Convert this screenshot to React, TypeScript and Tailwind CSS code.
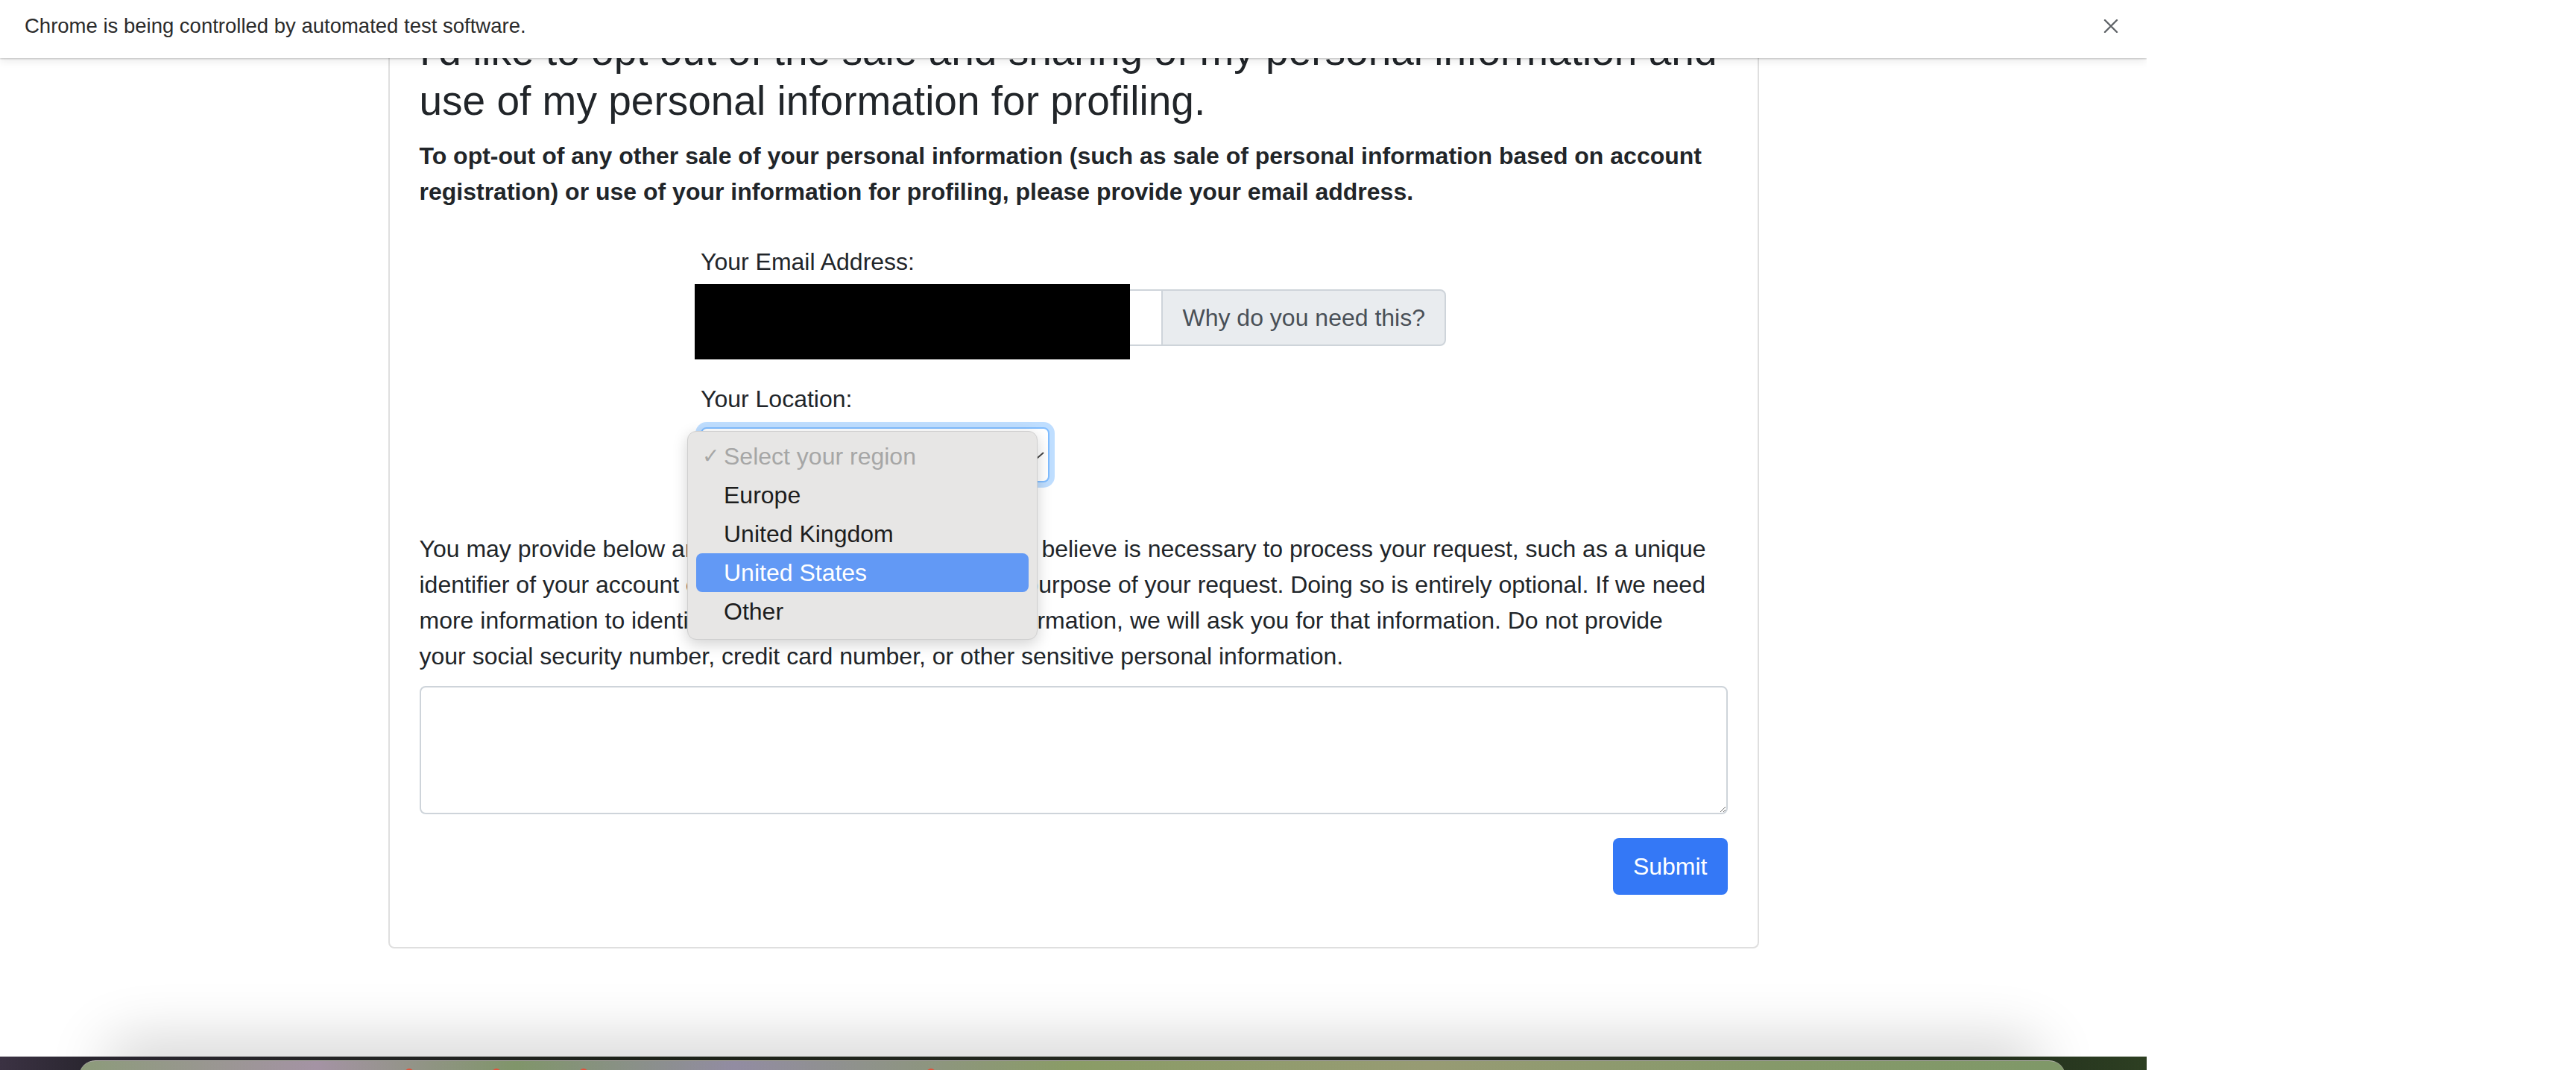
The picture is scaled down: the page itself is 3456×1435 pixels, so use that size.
import React from "react";
import clsx from "clsx";

const regions = ["Europe", "United Kingdom", "United States", "Other"];

const Infobar: React.FC = () => (
  <div className="relative z-10 flex h-[78px] shrink-0 items-center justify-between bg-white pb-[9px] pl-[33px] pr-[38px] shadow-[0_1px_2px_rgba(0,0,0,0.22),0_5px_10px_rgba(0,0,0,0.07)]">
    <span className="text-[27.5px] text-[#2b2b2b]">Chrome is being controlled by automated test software.</span>
    <svg width="20" height="18" viewBox="0 0 20 18" className="text-[#5f6368]">
      <path d="M2 1 L18 17 M18 1 L2 17" stroke="currentColor" strokeWidth="2.4" strokeLinecap="round" />
    </svg>
  </div>
);

const RegionMenu: React.FC = () => (
  <div className="absolute left-[-18px] top-[5px] z-20 w-[470px] rounded-[12px] border border-[#cfcfcf] bg-[#e7e6e5] pt-[7px] pb-[11px] shadow-[0_6px_20px_rgba(0,0,0,0.18)]">
    <div className="flex h-[52px] items-center text-[32px] text-[#a6a6a6]">
      <span className="w-[48px] pl-[19px] font-['DejaVu_Sans',sans-serif] text-[28px]">✓</span>
      Select your region
    </div>
    {regions.map((r) => (
      <div
        key={r}
        className={clsx(
          "mx-[11px] flex h-[52px] items-center rounded-[8px] pl-[37px] text-[32px]",
          r === "United States" ? "bg-[#6299f5] text-white" : "text-[#1d1d1d]"
        )}
      >
        {r}
      </div>
    ))}
  </div>
);

export default function App() {
  return (
    <div className="flex h-[1435px] w-[3456px] overflow-hidden bg-white font-['Liberation_Sans',Arial,sans-serif]">
      <div className="flex w-[2880px] shrink-0 flex-col">
        <div className="relative flex h-[1417px] flex-col overflow-hidden rounded-b-[12px] bg-white">
          <Infobar />
          <div className="flex-1 overflow-hidden">
            <div className="mx-auto -mt-[85px] w-[1839px] rounded-[8px] border-2 border-[#dfdfdf] px-[40px] pt-[40px] pb-[70px] text-[#212529]">
              <h3 className="mb-[16px] whitespace-nowrap text-[55px] leading-[67px]">
                I'd like to opt out of the sale and sharing of my personal information and
                <br />
                use of my personal information for profiling.
              </h3>
              <p className="mb-[46px] whitespace-nowrap text-[32px] font-bold leading-[48px]">
                To opt-out of any other sale of your personal information (such as sale of personal information based on account
                <br />
                registration) or use of your information for profiling, please provide your email address.
              </p>

              <div className="mx-auto w-[1000px]">
                <label className="mb-[13px] block text-[32px] leading-[48px]">Your Email Address:</label>
                <div className="relative flex h-[76px]">
                  <input className="flex-1 rounded-l-[8px] border-2 border-r-0 border-[#ced4da] bg-white" />
                  <span className="flex items-center rounded-r-[8px] border-2 border-[#ced4da] bg-[#e9ecef] px-[26px] text-[32px] text-[#495057]">
                    Why do you need this?
                  </span>
                  <div className="absolute left-[-8px] top-[-7px] h-[101px] w-[584px] bg-black" />
                </div>

                <label className="mt-[47px] mb-[14px] block text-[32px] leading-[48px]">Your Location:</label>
                <div className="relative w-[468px]">
                  <div className="relative flex h-[74px] items-center rounded-[8px] border-2 border-[#80bdff] bg-white pl-[22px] text-[32px] text-[#495057] shadow-[0_0_0_7px_rgba(0,123,255,0.25)]">
                    Select your region
                    <svg width="18" height="10" viewBox="0 0 18 10" className="absolute left-[441px] top-[31px] text-[#444]">
                      <path d="M1 1 L9 8 L17 1" fill="none" stroke="currentColor" strokeWidth="2" />
                    </svg>
                  </div>
                  <RegionMenu />
                </div>
              </div>

              <p className="mt-[65px] whitespace-nowrap text-[32px] leading-[48px]">
                You may provide below any additional information that you believe is necessary to process your request, such as a unique
                <br />
                identifier of your account or a complete description of the purpose of your request. Doing so is entirely optional. If we need
                <br />
                more information to identify you or to locate the proper information, we will ask you for that information. Do not provide
                <br />
                your social security number, credit card number, or other sensitive personal information.
              </p>
              <textarea className="mt-[16px] block h-[172px] w-full rounded-[8px] border-2 border-[#ced4da] bg-white" />
              <div className="mt-[32px] flex justify-end">
                <button className="h-[76px] rounded-[8px] bg-[#3478f6] px-[27px] text-[32px] text-white">Submit</button>
              </div>
            </div>
          </div>
          {/* dock shadow falling on the window */}
          <div className="pointer-events-none absolute bottom-[-30px] left-[160px] right-[160px] h-[30px] rounded-[22px] shadow-[0_0_80px_20px_rgba(0,0,0,0.19)]" />
        </div>

        <div className="relative flex-1 bg-[linear-gradient(90deg,#3b3243_0%,#2a2630_4%,#1d2219_30%,#262a22_60%,#1f2a1b_90%,#2d3f22_100%)]">
          <div className="absolute left-[106px] top-[5px] h-[30px] w-[2665px] overflow-hidden rounded-t-[22px] border-t border-[#b9b7b0] bg-[linear-gradient(90deg,#8c9b7a_0%,#a493a4_12%,#80956a_22%,#928ca2_33%,#8a9c66_50%,#979b74_68%,#86996a_85%,#7f9868_100%)]">
            <span className="absolute left-[437px] top-[10px] h-[14px] w-[12px] rounded-full bg-[#e0533c]" />
            <span className="absolute left-[554px] top-[10px] h-[14px] w-[12px] rounded-full bg-[#e0533c]" />
            <span className="absolute left-[671px] top-[10px] h-[14px] w-[12px] rounded-full bg-[#e0533c]" />
            <span className="absolute left-[1137px] top-[10px] h-[14px] w-[12px] rounded-full bg-[#e0533c]" />
          </div>
        </div>
      </div>
    </div>
  );
}
